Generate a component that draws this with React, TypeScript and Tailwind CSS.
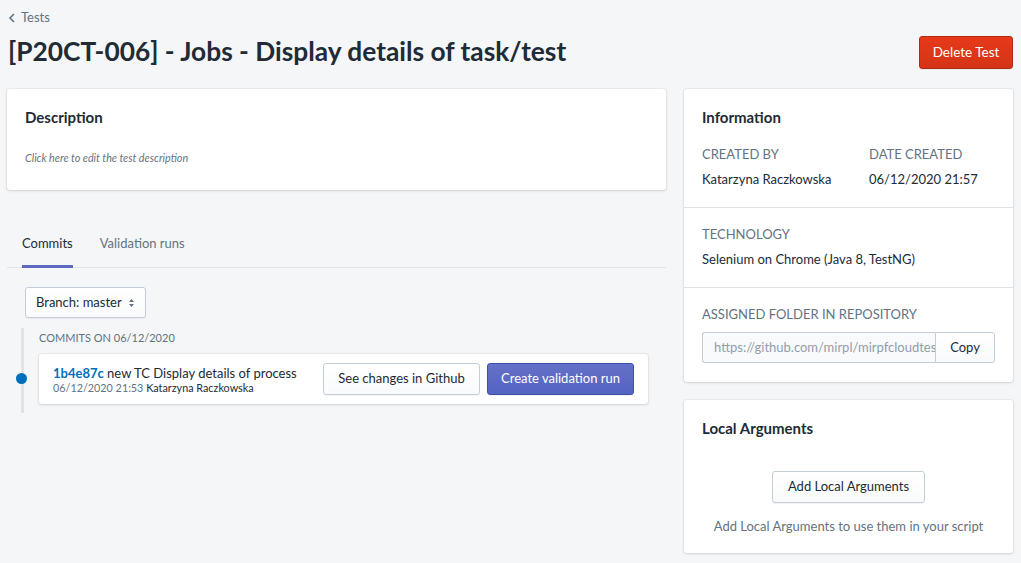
import React from "react";

const font = { fontFamily: "Lato, 'Noto Sans', sans-serif" };

function Btn({ children, className = "" }: { children: React.ReactNode; className?: string }) {
  return (
    <button
      className={
        "h-[32px] whitespace-nowrap rounded-[3px] border border-[#c4cdd5] bg-gradient-to-b from-white to-[#f9fafb] text-[13.5px] text-[#212b36] shadow-[0_1px_0_0_rgba(22,29,37,0.05)] " +
        className
      }
    >
      {children}
    </button>
  );
}

export default function App() {
  return (
    <div style={font} className="min-h-[563px] w-[1021px] bg-[#f4f6f8] text-[#212b36]">
      <div className="px-[7px] pt-[9px]">
        {/* breadcrumb */}
        <div className="flex items-center h-[18px] pl-[1px] text-[13px] text-[#637381]">
          <svg width="8" height="10" viewBox="0 0 8 10" className="mr-[5px]">
            <path d="M6 1 L2 5 L6 9" fill="none" stroke="#637381" strokeWidth="1.6" />
          </svg>
          Tests
        </div>
        {/* header */}
        <div className="flex items-start justify-between mt-[9px]">
          <h1 className="text-[26.3px] leading-[30px] font-bold pl-[1px] whitespace-nowrap">
            [P20CT-006] - Jobs - Display details of task/test
          </h1>
          <button className="mr-[1px] h-[33px] w-[94px] rounded-[3px] border border-[#b02b13] bg-gradient-to-b from-[#e6391a] to-[#d53417] text-white text-[13.5px] shadow-[0_1px_0_0_rgba(22,29,37,0.05)]">
            Delete Test
          </button>
        </div>

        <div className="flex gap-[18px] mt-[20px]">
          {/* left column */}
          <div className="w-[659px]">
            <div className="bg-white rounded-[3px] shadow-[0_0_0_1px_rgba(63,63,68,0.05),0_1px_3px_0_rgba(63,63,68,0.15)] h-[101px] px-[18px] pt-[18px]">
              <div className="text-[15px] leading-[20px] font-bold">Description</div>
              <div className="mt-[24px] text-[10.75px] leading-[13px] italic text-[#637381]">
                Click here to edit the test description
              </div>
            </div>

            {/* tabs */}
            <div className="mt-[30px] flex border-b border-[#dfe3e8] pl-[15px] gap-[27px] text-[13px]">
              <div className="pt-[15px] pb-[14px] border-b-[3px] border-[#5c6ac4] -mb-px leading-[16px] text-[#212b36]">
                Commits
              </div>
              <div className="pt-[15px] pb-[14px] border-b-[3px] border-transparent -mb-px leading-[16px] text-[#637381]">
                Validation runs
              </div>
            </div>

            <div className="pl-[18px] pt-[19px]">
              <button className="h-[31px] px-[10px] rounded-[3px] border border-[#c4cdd5] bg-gradient-to-b from-white to-[#f9fafb] text-[13px] text-[#212b36] flex items-center gap-[6px] shadow-[0_1px_0_0_rgba(22,29,37,0.05)]">
                Branch: master
                <svg width="7" height="10" viewBox="0 0 7 10">
                  <path d="M3.5 1 L6 4 H1 Z M3.5 9 L6 6 H1 Z" fill="#637381" />
                </svg>
              </button>
            </div>

            <div className="ml-[14px] mr-[18px] mt-[10px] border-l-[3px] border-[#dfe3e8] pl-[15px] pb-[9px]">
              <div className="pt-[3px] text-[11px] leading-[14px] text-[#637381] uppercase">Commits on 06/12/2020</div>
              <div className="relative mt-[9px] h-[50px] bg-white rounded-[3px] shadow-[0_0_0_1px_rgba(63,63,68,0.05),0_1px_3px_0_rgba(63,63,68,0.15)] flex items-center justify-between pl-[14px] pr-[14px]">
                <span className="absolute left-[-23px] top-[19px] w-[11px] h-[11px] rounded-full bg-[#006fbb]" />
                <div className="pt-[1px]">
                  <div className="text-[13px] leading-[16px]">
                    <span className="font-bold text-[#006fbb]">1b4e87c</span> new TC Display details of process
                  </div>
                  <div className="text-[10.8px] leading-[14px] text-[#637381]">
                    06/12/2020 21:53 <span className="text-[#212b36]">Katarzyna Raczkowska</span>
                  </div>
                </div>
                <div className="flex gap-[7px]">
                  <Btn className="w-[157px] text-[13px]">See changes in Github</Btn>
                  <button className="h-[32px] w-[147px] whitespace-nowrap rounded-[3px] border border-[#3f4eae] bg-gradient-to-b from-[#6371c7] to-[#5563c1] text-white text-[13px] shadow-[0_1px_0_0_rgba(22,29,37,0.05)]">
                    Create validation run
                  </button>
                </div>
              </div>
            </div>
          </div>

          {/* right column */}
          <div className="w-[329px] flex flex-col gap-[18px]">
            <div className="bg-white rounded-[3px] shadow-[0_0_0_1px_rgba(63,63,68,0.05),0_1px_3px_0_rgba(63,63,68,0.15)] text-[13px]">
              <div className="px-[18px] pt-[18px] pb-[20px] border-b border-[#dfe3e8]">
                <div className="text-[15px] leading-[20px] font-bold">Information</div>
                <div className="flex mt-[19px]">
                  <div className="w-[167px]">
                    <div className="leading-[16px] text-[#637381]">CREATED BY</div>
                    <div className="leading-[16px] mt-[9px]">Katarzyna Raczkowska</div>
                  </div>
                  <div>
                    <div className="leading-[16px] text-[#637381]">DATE CREATED</div>
                    <div className="leading-[16px] mt-[9px]">06/12/2020 21:57</div>
                  </div>
                </div>
              </div>
              <div className="px-[18px] pt-[18px] pb-[20px] border-b border-[#dfe3e8]">
                <div className="leading-[16px] text-[#637381]">TECHNOLOGY</div>
                <div className="leading-[16px] mt-[9px]">Selenium on Chrome (Java 8, TestNG)</div>
              </div>
              <div className="px-[18px] pt-[18px] pb-[19px]">
                <div className="leading-[16px] text-[#637381]">ASSIGNED FOLDER IN REPOSITORY</div>
                <div className="flex mt-[10px] h-[31px]">
                  <div className="w-[233px] border border-[#c4cdd5] border-r-0 rounded-l-[3px] bg-[#f9fafb] px-[11px] flex items-center overflow-hidden whitespace-nowrap text-[#919eab]">
                    https://github.com/mirpl/mirpfcloudtests/tree/master
                  </div>
                  <button className="w-[60px] border border-[#c4cdd5] rounded-r-[3px] bg-gradient-to-b from-white to-[#f9fafb] text-[13px]">
                    Copy
                  </button>
                </div>
              </div>
            </div>

            <div className="bg-white rounded-[3px] shadow-[0_0_0_1px_rgba(63,63,68,0.05),0_1px_3px_0_rgba(63,63,68,0.15)] px-[18px] pt-[18px] pb-[19px] h-[153px]">
              <div className="text-[15px] leading-[20px] font-bold">Local Arguments</div>
              <div className="flex flex-col items-center mt-[33px]">
                <Btn className="w-[153px] text-[13px]">Add Local Arguments</Btn>
                <div className="mt-[15px] text-[13px] leading-[16px] text-[#637381]">
                  Add Local Arguments to use them in your script
                </div>
              </div>
            </div>
          </div>
        </div>
      </div>
    </div>
  );
}
